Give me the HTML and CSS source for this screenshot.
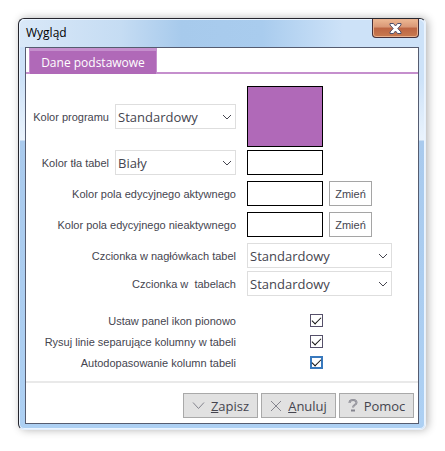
FILE: index.html
```html
<!DOCTYPE html>
<html lang="pl">
<head>
  <meta charset="UTF-8">
  <meta name="viewport" content="width=device-width, initial-scale=1.0">
  <title>Wygląd</title>
  <link rel="stylesheet" href="styles.css">
</head>
<body>
  <div class="window">
    <header class="titlebar">
      <h1 class="title">Wygląd</h1>
      <button class="close" type="button" aria-label="Zamknij">
        <svg width="13" height="11" viewBox="0 0 13 11">
          <path d="M1 .5h3.500L6.500 3 8.500.5H12v1.500L8.800 5.500 12 9v1.500H8.500L6.500 8l-2 2.500H1V9l3.200-3.500L1 2z" fill="#fff" stroke="#50506a"/>
        </svg>
      </button>
    </header>

    <form class="panel">
      <nav class="tabs">
        <button class="tab" type="button">Dane podstawowe</button>
      </nav>

      <div class="fields">
        <div class="row">
          <div class="lead">
            <label for="program">Kolor programu</label>
            <div class="select">
              <select id="program"><option>Standardowy</option></select>
              <svg class="arrow" width="10" height="6" viewBox="0 0 10 6"><path d="M1 1l4 4 4-4"/></svg>
            </div>
          </div>
          <div class="swatch swatch-big"></div>
        </div>
        <div class="row row-close">
          <div class="lead">
            <label for="table-bg">Kolor tła tabel</label>
            <div class="select">
              <select id="table-bg"><option>Biały</option></select>
              <svg class="arrow" width="10" height="6" viewBox="0 0 10 6"><path d="M1 1l4 4 4-4"/></svg>
            </div>
          </div>
          <div class="swatch"></div>
        </div>
        <div class="row">
          <div class="lead">Kolor pola edycyjnego aktywnego</div>
          <div class="swatch"></div>
          <button class="change" type="button">Zmień</button>
        </div>
        <div class="row">
          <div class="lead">Kolor pola edycyjnego nieaktywnego</div>
          <div class="swatch"></div>
          <button class="change" type="button">Zmień</button>
        </div>
        <div class="row">
          <label class="lead" for="head-font">Czcionka w nagłówkach tabel</label>
          <div class="select select-wide">
            <select id="head-font"><option>Standardowy</option></select>
            <svg class="arrow" width="10" height="6" viewBox="0 0 10 6"><path d="M1 1l4 4 4-4"/></svg>
          </div>
        </div>
        <div class="row row-close">
          <label class="lead" for="table-font">Czcionka w &nbsp;tabelach</label>
          <div class="select select-wide">
            <select id="table-font"><option>Standardowy</option></select>
            <svg class="arrow" width="10" height="6" viewBox="0 0 10 6"><path d="M1 1l4 4 4-4"/></svg>
          </div>
        </div>

        <div class="checks">
          <div class="check">
            <label class="lead" for="icons">Ustaw panel ikon pionowo</label>
            <input type="checkbox" id="icons" checked>
          </div>
          <div class="check">
            <label class="lead" for="lines">Rysuj linie separujące kolumny w tabeli</label>
            <input type="checkbox" id="lines" checked>
          </div>
          <div class="check">
            <label class="lead" for="autofit">Autodopasowanie kolumn tabeli</label>
            <input type="checkbox" class="active" id="autofit" checked>
          </div>
        </div>
      </div>

      <footer class="actions">
        <button class="action" type="button">
          <svg width="13" height="9" viewBox="0 0 13 9"><path d="M1 1.500l5.500 6 5.500-6"/></svg>
          <span><u>Z</u>apisz</span>
        </button>
        <button class="action" type="button">
          <svg width="12" height="12" viewBox="0 0 12 12"><path d="M1 1l10 10M11 1L1 11"/></svg>
          <span><u>A</u>nuluj</span>
        </button>
        <button class="action" type="button">
          <svg width="10" height="13" viewBox="0 0 10 13">
            <path d="M1.500 4C1.500 0 8.500 0 8.500 3.500 8.500 6 5 5.500 5 8.500" stroke-width="2"/>
            <path d="M3 11.500h4" stroke-width="2"/>
            <path d="M1.500 4C1.500 0 8.500 0 8.500 3.500 8.500 6 5 5.500 5 8.500" class="shine"/>
          </svg>
          <span>Pomoc</span>
        </button>
      </footer>
    </form>
  </div>
</body>
</html>
```

FILE: styles.css
```css
* {
  box-sizing: border-box;
}

body {
  margin: 0;
  padding: 18px 19px 19px 18px;
  background-color: #fff;
  font-family: "Liberation Sans", Arial, sans-serif;
  font-size: 11px;
  color: #45454f;
}

button,
select,
input {
  margin: 0;
  font-family: inherit;
  color: inherit;
}

.title,
.tab,
.action,
select {
  font-family: "Open Sans", "Noto Sans", sans-serif;
}

.window {
  padding: 0 6px 5px;
  border: 1px solid #25252d;
  border-bottom-color: #e4eefa;
  border-right-color: #e8f1fb;
  border-radius: 6px;
  background: linear-gradient(#cde2f8 0, #cde2f8 60px, #eaf3fc 121px, #a9caed 122px, #add0f3);
  box-shadow: inset 0 0 0 1px #eaf4ff, 2px 0 9px rgba(0, 0, 0, 0.3);
}

.titlebar {
  display: flex;
  justify-content: space-between;
  align-items: flex-start;
  height: 28px;
  margin: 0 -5px;
  padding: 0 5px 0 6px;
  border-radius: 5px 5px 0 0;
  background: linear-gradient(90deg, #d9e8f8, #c5dcf3 25%, #a7caec 40%, #a9ccee 60%, #cde2f8 80%);
  box-shadow: inset 0 1px #eaf4ff;
}

.title {
  margin: 0;
  font-size: 12px;
  font-weight: normal;
  line-height: 28px;
  color: #000;
}

.close {
  display: flex;
  justify-content: center;
  align-items: center;
  width: 47px;
  height: 19px;
  padding: 0;
  border: 1px solid #45303a;
  border-top: 0;
  border-radius: 0 0 4px 4px;
  background: linear-gradient(#edb994, #d99776 45%, #bd6543 50%, #c87a50);
  box-shadow: inset 0 0 0 1px #e8b08e;
}

.panel {
  border: 1px solid #555c70;
  background-color: #fff;
}

.tabs {
  display: flex;
  padding-left: 3px;
  border-bottom: 2px solid #c58fcd;
}

.tab {
  min-width: 128px;
  height: 26px;
  margin-bottom: -2px;
  padding: 0 8px;
  border: 1px solid #c58fcd;
  border-top-width: 3px;
  border-bottom: 0;
  background-color: #b069b8;
  font-size: 12px;
  line-height: 18px;
  color: #fff;
}

.fields {
  display: flex;
  flex-direction: column;
  gap: 6px;
  padding: 12px 0;
}

.row,
.check {
  display: flex;
  align-items: center;
}

.row-close {
  margin-top: -3px;
}

.lead {
  display: flex;
  justify-content: flex-end;
  align-items: center;
  gap: 6px;
  width: 210px;
  margin-right: 11px;
  white-space: nowrap;
}

.select {
  position: relative;
  width: 121px;
}

.select-wide {
  width: 145px;
}

select {
  display: block;
  width: 100%;
  height: 25px;
  padding: 0 2px;
  border: 1px solid #dedede;
  border-radius: 0;
  appearance: none;
  background-color: #fff;
  font-size: 13px;
}

.arrow {
  position: absolute;
  top: 10px;
  right: 4px;
  fill: none;
  stroke: #45454f;
  pointer-events: none;
}

.swatch {
  width: 76px;
  height: 25px;
  border: 1px solid #000;
}

.swatch-big {
  height: 61px;
  background-color: #b069b8;
}

.change {
  width: 43px;
  height: 25px;
  margin-left: 6px;
  padding: 0;
  border: 1px solid #a5a5a5;
  background-color: #fff;
  font-size: 11px;
}

.checks {
  display: flex;
  flex-direction: column;
  gap: 8px;
  padding-top: 12px;
}

.check {
  height: 13px;
}

input[type="checkbox"] {
  display: flex;
  justify-content: center;
  width: 13px;
  height: 13px;
  margin-left: 63px;
  border: 1px solid #55506a;
  appearance: none;
}

input[type="checkbox"]::before {
  content: "";
  flex: none;
  width: 8px;
  height: 4px;
  margin-top: 2px;
  border: solid #111;
  border-width: 0 0 1px 1px;
  transform: rotate(-45deg);
}

input[type="checkbox"].active {
  border: 2px solid #3979bd;
}

input[type="checkbox"].active::before {
  margin-top: 1px;
}

.actions {
  display: flex;
  justify-content: flex-end;
  gap: 3px;
  padding: 10px 4px 5px;
  border-top: 2px solid #e9e9e9;
}

.action {
  display: flex;
  justify-content: center;
  align-items: center;
  gap: 6px;
  width: 75px;
  height: 25px;
  padding: 0;
  border: 1px solid #a9a9a9;
  background-color: #e1e1e1;
  font-size: 13px;
}

.action svg {
  fill: none;
  stroke: #84848e;
}

.action .shine {
  stroke: #d0d0d0;
  stroke-width: 0.5;
}
```
